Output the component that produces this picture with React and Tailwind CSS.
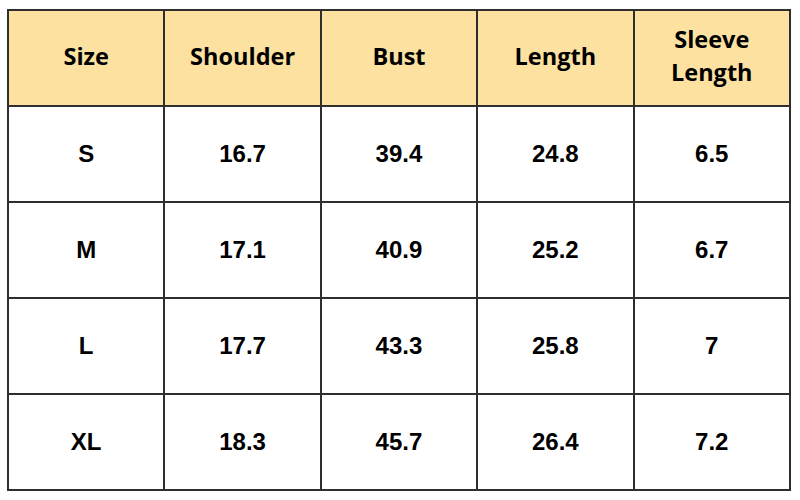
import React from 'react';

const HEADERS = ['Size', 'Shoulder', 'Bust', 'Length', 'Sleeve Length'];

const ROWS = [
  ['S', '16.7', '39.4', '24.8', '6.5'],
  ['M', '17.1', '40.9', '25.2', '6.7'],
  ['L', '17.7', '43.3', '25.8', '7'],
  ['XL', '18.3', '45.7', '26.4', '7.2'],
];

const App = () => {
  return (
    <div className="w-[800px] h-[500px] bg-white pt-[9px] pl-[7px]">
      <table className="w-[784px] h-[481px] border-collapse table-fixed border-2 border-[#2e2e2e]">
        <thead>
          <tr className="h-[96px] bg-[#fde1a1]">
            {HEADERS.map((h) => (
              <th
                key={h}
                className="border-2 border-[#2e2e2e] px-6 pb-1 text-center text-[23.5px] leading-[33px] font-bold text-black font-['Open_Sans',sans-serif]"
              >
                {h}
              </th>
            ))}
          </tr>
        </thead>
        <tbody>
          {ROWS.map((row) => (
            <tr key={row[0]} className="h-[96px]">
              {row.map((cell, i) => (
                <td
                  key={i}
                  className="border-2 border-[#2e2e2e] text-center text-[24px] font-bold text-black font-['Liberation_Sans',Arial,sans-serif]"
                >
                  {cell}
                </td>
              ))}
            </tr>
          ))}
        </tbody>
      </table>
    </div>
  );
};

export default App;
